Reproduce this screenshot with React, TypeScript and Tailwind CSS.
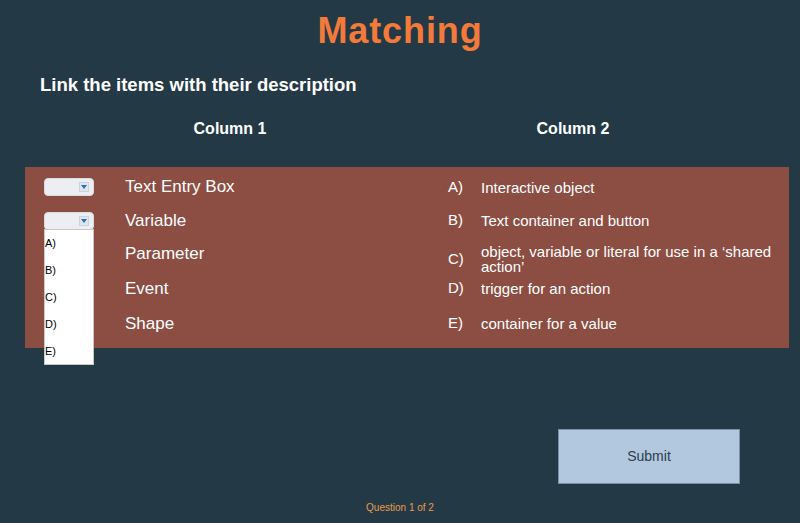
import React from "react";

const left = ["Text Entry Box", "Variable", "Parameter", "Event", "Shape"];
const right: [string, string][] = [
  ["A)", "Interactive object"],
  ["B)", "Text container and button"],
  ["C)", "object, variable or literal for use in a \u2018shared action\u2019"],
  ["D)", "trigger for an action"],
  ["E)", "container for a value"],
];
const heights = ["h-[34px]", "h-[33px]", "h-[34px]", "h-[35px]", "h-[35px]"];

function Dropdown() {
  return (
    <div className="w-[50px] h-[18px] rounded-[4px] bg-[#eceef1] border border-[#d9dde2] flex items-center justify-end pr-[4px]">
      <div className="w-[10px] h-[10px] bg-[#dde6ef] border border-[#c9d4df] flex items-center justify-center">
        <svg width="6" height="4" viewBox="0 0 6 4">
          <path d="M0 0 L6 0 L3 4 Z" fill="#2f6fb3" />
        </svg>
      </div>
    </div>
  );
}

export default function App() {
  return (
    <div
      className="w-[800px] h-[523px] bg-[#233946] flex flex-col relative overflow-hidden"
      style={{ fontFamily: '"Liberation Sans", Arial, sans-serif' }}
    >
      <div className="h-[60px] flex items-center justify-center pt-[1px]">
        <span className="text-[36px] font-bold text-[#f47a3a] tracking-[0.9px]">Matching</span>
      </div>
      <div className="h-[50px] flex items-center pl-[40px]">
        <span className="text-[18.5px] font-bold text-white">Link the items with their description</span>
      </div>
      <div className="h-[38px] flex items-center">
        <div className="ml-[130px] w-[200px] text-center text-[16px] font-bold text-white">Column 1</div>
        <div className="ml-[143px] w-[200px] text-center text-[16px] font-bold text-white">Column 2</div>
      </div>
      <div className="mt-[19px] ml-[25px] w-[764px] bg-[#8c4e42] pt-[3px] pb-[7px] relative">
        {left.map((l, i) => (
          <div key={l} className={`${heights[i]} flex items-center`}>
            <div className="w-[100px] pl-[19px] flex items-center">{i < 2 ? <Dropdown /> : null}</div>
            <div className="w-[323px] text-[17px] text-white">{l}</div>
            <div className={`w-[33px] text-[15px] text-white ${i === 2 ? "mt-[10px]" : ""}`}>{right[i][0]}</div>
            <div className={`w-[300px] text-[15px] leading-[15px] text-white ${i === 2 ? "mt-[10px]" : ""}`}>
              {right[i][1]}
            </div>
          </div>
        ))}
        <div className="absolute left-[19px] top-[62px] w-[50px] h-[136px] bg-white border border-[#c8c8c8] flex flex-col overflow-hidden">
          {["A)", "B)", "C)", "D)", "E)"].map((o) => (
            <div key={o} className="h-[27px] shrink-0 flex items-center text-[11px] text-black leading-none">
              {o}
            </div>
          ))}
        </div>
      </div>
      <div className="mt-[81px] ml-[558px] w-[182px] h-[55px] bg-[#b2c8de] border border-[#7a90a6] flex items-center justify-center">
        <span className="text-[14px] text-[#2b3d4f]">Submit</span>
      </div>
      <div className="mt-[16px] flex justify-center">
        <span className="text-[10px] text-[#e99a4c]">Question 1 of 2</span>
      </div>
    </div>
  );
}
